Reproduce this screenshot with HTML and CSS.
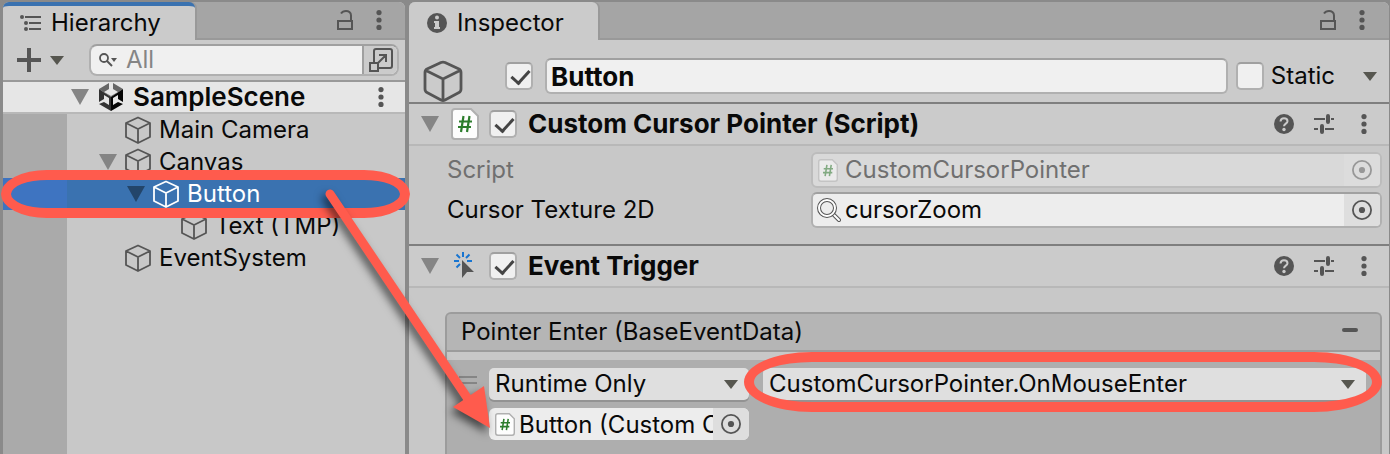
FILE: index.html
```
<!DOCTYPE html>
<html lang="en">
<head>
<meta charset="utf-8">
<title>Editor</title>
<link rel="stylesheet" href="styles.css">
</head>
<body>
<svg class="defs" aria-hidden="true">
  <symbol id="cube" viewBox="0 0 28 28"><path d="M14 1.500 26 7v14l-12 6L2 21V7zM2 7l12 6 12-6M14 13v14" fill="none" stroke="currentColor" stroke-width="1.800" stroke-linejoin="round"/></symbol>
  <symbol id="cube-large" viewBox="0 0 40 42"><path d="M18 2.500 C19.500 1.800 20.500 1.800 22 2.500L36 9Q38 10 38 12.500V29Q38 31.500 36 32.500L22 40Q20 41 18 40L4 32.500Q2 31.500 2 29V12.500Q2 10 4 9zM3 10.500 20 19 37 10.500M20 19v21" fill="none" stroke="currentColor" stroke-width="2.800"/></symbol>
  <symbol id="fold" viewBox="0 0 18 16"><path d="M0 0h18L9 16z" fill="currentColor"/></symbol>
  <symbol id="caret" viewBox="0 0 14 9"><path d="M0 0h14L7 9z" fill="currentColor"/></symbol>
  <symbol id="dots" viewBox="0 0 6 20"><g fill="currentColor"><circle cx="3" cy="2.600" r="2.600"/><circle cx="3" cy="10" r="2.600"/><circle cx="3" cy="17.400" r="2.600"/></g></symbol>
  <symbol id="lock" viewBox="0 0 16 20"><path d="M1 11h14v8H1zM14 11V5.500C14 2.500 11.500 1 9 1S5 2 4 3.500" fill="none" stroke="currentColor" stroke-width="2"/></symbol>
  <symbol id="help" viewBox="0 0 20 20"><circle cx="10" cy="10" r="10" fill="currentColor"/><path d="M6.500 7.500C6.700 5.300 8 4.200 10 4.200s3.500 1.200 3.500 3c0 2.300-3.500 2.600-3.500 5" fill="none" stroke="#cbcbcb" stroke-width="2"/><circle cx="10" cy="15.500" r="1.700" fill="#cbcbcb"/></symbol>
  <symbol id="sliders" viewBox="0 0 20 20"><path d="M0 5h11M17 5h3M0 15h4M11 15h9" stroke="currentColor" stroke-width="2"/><path d="M14 2v6M8 12v6" stroke="currentColor" stroke-width="4" stroke-linecap="round"/></symbol>
  <symbol id="target" viewBox="0 0 20 20"><circle cx="10" cy="10" r="9.100" fill="none" stroke="currentColor" stroke-width="1.800"/><circle cx="10" cy="10" r="3.100" fill="currentColor"/></symbol>
  <symbol id="script" viewBox="0 0 28 32"><path d="M4 1h16l7 7v20q0 3-3 3H4q-3 0-3-3V4q0-3 3-3z" fill="#fdfdfd" stroke="#b0b0b0" stroke-width="2"/><path d="M12.500 8 10 24M18.500 8 16 24M8 13.500h13M7 19h13" fill="none" stroke="#2c7d2c" stroke-width="2.200"/></symbol>
</svg>

<main class="app">
  <section class="panel hierarchy">
    <header class="tabs">
      <h2 class="tab tab-active">
        <svg class="tab-icon" viewBox="0 0 22 18"><g fill="#555"><circle cx="2" cy="3" r="2"/><circle cx="6" cy="9" r="2"/><circle cx="6" cy="15" r="2"/></g><path d="M5 3h16M9 9h12M9 15h12" stroke="#555" stroke-width="2"/></svg>
        Hierarchy
      </h2>
      <div class="tab-tools">
        <button class="icon-btn" aria-label="Lock"><svg width="16" height="20"><use href="#lock"/></svg></button>
        <button class="icon-btn" aria-label="Menu"><svg width="6" height="20"><use href="#dots"/></svg></button>
      </div>
    </header>
    <div class="toolbar">
      <button class="icon-btn add" aria-label="Create">
        <svg width="24" height="24" viewBox="0 0 24 24"><path d="M12 0v24M0 12h24" stroke="#555" stroke-width="4"/></svg>
        <svg class="caret" width="14" height="9"><use href="#caret"/></svg>
      </button>
      <div class="search">
        <svg width="18" height="14" viewBox="0 0 18 14"><circle cx="5" cy="5" r="4" fill="none" stroke="#555" stroke-width="1.800"/><path d="m8 8 5 5" stroke="#555" stroke-width="2"/><path d="M12 5h6l-3 4z" fill="#555"/></svg>
        <input class="search-input" type="text" placeholder="All" aria-label="Search">
        <button class="search-expand" aria-label="Open search window">
          <svg width="24" height="24" viewBox="0 0 24 24"><path d="M5 14V3q0-2 2-2h14q2 0 2 2v15q0 2-2 2H10M1 15h8v8H1zM9 15l8-8M10 7h7v7" fill="none" stroke="#555" stroke-width="2"/></svg>
        </button>
      </div>
    </div>
    <div class="row scene">
      <svg class="fold" width="18" height="16"><use href="#fold"/></svg>
      <svg width="24" height="28" viewBox="0 0 24 28"><path d="M10 0v6L5 9l7 4 7-4-5-3V0l10 6-12 8L0 6z" fill="#666"/><path d="M0 6v13l5-3v-4l5 3v7l-5-3-5 2 12 7V14z" fill="#333"/><path d="M24 6v13l-5-3v-4l-5 3v7l5-3 5 2-12 7V14z" fill="#050505"/></svg>
      <strong class="scene-name">SampleScene</strong>
      <button class="icon-btn" aria-label="Scene menu"><svg width="6" height="20"><use href="#dots"/></svg></button>
    </div>
    <ul class="tree">
      <li class="row depth-1"><svg class="cube" width="28" height="28"><use href="#cube"/></svg>Main Camera</li>
      <li class="row depth-1 open"><svg class="fold" width="18" height="16"><use href="#fold"/></svg><svg class="cube" width="28" height="28"><use href="#cube"/></svg>Canvas</li>
      <li class="row depth-2 open selected"><svg class="fold" width="18" height="16"><use href="#fold"/></svg><svg class="cube" width="28" height="28"><use href="#cube"/></svg>Button</li>
      <li class="row depth-3"><svg class="cube" width="28" height="28"><use href="#cube"/></svg>Text (TMP)</li>
      <li class="row depth-1"><svg class="cube" width="28" height="28"><use href="#cube"/></svg>EventSystem</li>
    </ul>
  </section>

  <section class="panel inspector">
    <header class="tabs">
      <h2 class="tab">
        <svg class="tab-icon info" viewBox="0 0 20 20"><circle cx="10" cy="10" r="10" fill="#555"/><circle cx="10" cy="4.500" r="2" fill="#cbcbcb"/><path d="M7 8h5v6h1v2H7v-2h1v-4H7z" fill="#cbcbcb"/></svg>
        Inspector
      </h2>
      <div class="tab-tools">
        <button class="icon-btn" aria-label="Lock"><svg width="16" height="20"><use href="#lock"/></svg></button>
        <button class="icon-btn" aria-label="Menu"><svg width="6" height="20"><use href="#dots"/></svg></button>
      </div>
    </header>
    <div class="object">
      <svg class="object-icon" width="40" height="42"><use href="#cube-large"/></svg>
      <input class="check" type="checkbox" checked aria-label="Active">
      <input class="object-name" type="text" value="Button" aria-label="Name">
      <label class="static"><input class="check" type="checkbox">Static</label>
      <button class="icon-btn caret" aria-label="Static options"><svg width="14" height="9"><use href="#caret"/></svg></button>
    </div>

    <header class="component">
      <svg class="fold" width="18" height="16"><use href="#fold"/></svg>
      <svg class="component-icon" width="28" height="32"><use href="#script"/></svg>
      <label class="component-title"><input class="check" type="checkbox" checked>Custom Cursor Pointer (Script)</label>
      <div class="component-tools">
        <button class="icon-btn" aria-label="Help"><svg width="20" height="20"><use href="#help"/></svg></button>
        <button class="icon-btn" aria-label="Presets"><svg width="20" height="20"><use href="#sliders"/></svg></button>
        <button class="icon-btn menu" aria-label="Menu"><svg width="6" height="20"><use href="#dots"/></svg></button>
      </div>
    </header>
    <div class="fields">
      <div class="field disabled">
        <span>Script</span>
        <div class="slot">
          <svg class="slot-icon" width="20" height="23"><use href="#script"/></svg>
          <span class="slot-value">CustomCursorPointer</span>
          <button class="pick" disabled aria-label="Pick script"><svg width="20" height="20"><use href="#target"/></svg></button>
        </div>
      </div>
      <div class="field">
        <span>Cursor Texture 2D</span>
        <div class="slot">
          <svg class="slot-icon" width="24" height="24" viewBox="0 0 24 24"><path d="m16 16 6 6" stroke="#555" stroke-width="4" stroke-linecap="round"/><path d="m16 16 6 6" stroke="#fff" stroke-width="2" stroke-linecap="round"/><circle cx="10" cy="10" r="8" fill="none" stroke="#555" stroke-width="4"/><circle cx="10" cy="10" r="8" fill="none" stroke="#fff" stroke-width="2"/></svg>
          <span class="slot-value">cursorZoom</span>
          <button class="pick" aria-label="Pick texture"><svg width="20" height="20"><use href="#target"/></svg></button>
        </div>
      </div>
    </div>

    <header class="component">
      <svg class="fold" width="18" height="16"><use href="#fold"/></svg>
      <svg class="component-icon" width="28" height="32" viewBox="0 0 28 32"><path d="M12 2v5M3 11h5M16 11h5M5.500 4.500 9 8M18.500 4.500 15 8M5.500 17.500 9 14" stroke="#1875d1" stroke-width="2"/><path d="m11 10 12 12h-7l-5 6z" fill="#555"/></svg>
      <label class="component-title"><input class="check" type="checkbox" checked>Event Trigger</label>
      <div class="component-tools">
        <button class="icon-btn" aria-label="Help"><svg width="20" height="20"><use href="#help"/></svg></button>
        <button class="icon-btn" aria-label="Presets"><svg width="20" height="20"><use href="#sliders"/></svg></button>
        <button class="icon-btn menu" aria-label="Menu"><svg width="6" height="20"><use href="#dots"/></svg></button>
      </div>
    </header>
    <div class="event">
      <div class="event-head">
        <span>Pointer Enter (BaseEventData)</span>
        <button class="icon-btn" aria-label="Remove event"><svg width="16" height="4"><rect width="16" height="4" rx="2" fill="#555"/></svg></button>
      </div>
      <div class="event-body">
        <svg class="grip" width="18" height="8" viewBox="0 0 18 8"><path d="M0 1h18M0 7h18" stroke="#858585" stroke-width="2"/></svg>
        <div class="listener">
          <div class="dropdown">
            <select class="select" aria-label="Call state"><option>Runtime Only</option></select>
            <svg class="select-caret" width="14" height="9"><use href="#caret"/></svg>
          </div>
          <div class="dropdown ringed">
            <select class="select" aria-label="Function"><option>CustomCursorPointer.OnMouseEnter</option></select>
            <svg class="select-caret" width="14" height="9"><use href="#caret"/></svg>
          </div>
          <div class="slot target">
            <svg class="slot-icon" width="20" height="23"><use href="#script"/></svg>
            <span class="slot-value">Button (Custom C</span>
            <button class="pick" aria-label="Pick target"><svg width="20" height="20"><use href="#target"/></svg></button>
          </div>
        </div>
      </div>
    </div>
  </section>
</main>
<svg class="arrow" width="500" height="454" aria-hidden="true"><path d="M330 194 470 402" stroke="#ff5b4d" stroke-width="9" stroke-linecap="round"/><path d="M490 428 453 407 484 386z" fill="#ff5b4d"/></svg>
</body>
</html>
```
FILE: styles.css
```
* { box-sizing: border-box; }
body {
  margin: 0;
  overflow: hidden;
  background: #8a8a8a;
  color: #090909;
  font: 24px/32px Inter, "Liberation Sans", sans-serif;
}
svg { display: block; flex: none; }
button, input, select { margin: 0; font: inherit; color: inherit; }
.defs { position: absolute; width: 0; height: 0; }
.app {
  display: grid;
  grid-template-columns: 402px 1fr;
  gap: 4px;
  min-height: 100vh;
  padding: 2px 1px 0 3px;
}
.panel { display: flex; flex-direction: column; min-width: 0; background: #c8c8c8; border-radius: 6px 6px 0 0; }
.icon-btn { display: flex; align-items: center; padding: 0; border: 0; background: none; color: #555; }

.tabs {
  display: flex;
  justify-content: space-between;
  height: 38px;
  background: #a5a5a5;
  border-radius: 6px 6px 0 0;
  box-shadow: inset 0 -2px #999;
}
.tab {
  display: flex;
  align-items: center;
  gap: 10px;
  margin: 0;
  padding: 4px 34px 0 18px;
  font-size: 24px;
  font-weight: 400;
  background: #cbcbcb;
  border-radius: 6px 6px 0 0;
  box-shadow: 2px 0 #999;
}
.tab-active { gap: 9px; padding: 0 34px 0 17px; border-top: 4px solid #3a72b0; }
.tab-icon { width: 22px; height: 18px; }
.info { width: 20px; height: 20px; }
.tab-tools { display: flex; gap: 23px; padding: 0 24px 2px 0; }
.hierarchy .tab-tools { padding-right: 23px; }

.toolbar { display: flex; align-items: center; gap: 25px; height: 42px; padding: 0 6px 0 14px; background: #cbcbcb; border-bottom: 2px solid #999; }
.add { gap: 9px; }
.caret { color: #56564f; }
.search { display: flex; flex: 1; align-items: center; min-width: 0; height: 32px; padding-left: 8px; background: #f0f0f0; border: 2px solid #b0b0b0; border-top-color: #a0a0a0; border-radius: 8px; }
.search-input { flex: 1; min-width: 0; height: 28px; padding: 0 0 0 9px; border: 0; background: none; }
.search-input::placeholder { color: #858585; opacity: 1; }
.search-expand { display: flex; align-items: center; justify-content: center; width: 35px; height: 28px; padding: 0; background: #cbcbcb; border: 0; border-left: 2px solid #a0a0a0; border-radius: 0 6px 6px 0; }

.row { display: flex; align-items: center; gap: 7px; height: 32px; }
.fold { color: #858585; }
.scene { gap: 10px; padding: 0 21px 0 68px; background: #e6e6e6; border-bottom: 2px solid #b8b8b8; }
.scene-name { flex: 1; font-size: 26px; font-weight: 600; }
.tree { flex: 1; margin: 0; padding: 0; list-style: none; background: linear-gradient(90deg, #aaa 64px, #c8c8c8 64px); }
.tree .row { position: relative; padding-bottom: 1px; }
.tree .cube { color: #555; }
.depth-1 { padding-left: 121px; }
.depth-2 { padding-left: 149px; }
.depth-3 { padding-left: 177px; }
.depth-1.open { padding-left: 96px; }
.depth-2.open { padding-left: 124px; }
.tree .selected { z-index: 1; color: #fff; background: linear-gradient(90deg, #3e74c1 64px, #3a72b0 64px); }
.selected .fold { color: #23456a; }
.tree .selected .cube { color: #fff; }
.selected::after { content: ""; position: absolute; inset: -8px -5px -8px -2px; border: 10px solid #ff5b4d; border-radius: 46px / 24px; }

.object { display: flex; align-items: center; height: 64px; padding: 10px 12px 0 14px; background: #cbcbcb; border-bottom: 2px solid #7f7f7f; }
.object-icon { align-self: flex-end; margin-right: 42px; color: #555; }
.object-name { flex: 1; min-width: 0; height: 36px; margin: 0 8px 0 12px; padding: 0 4px; font-size: 26px; font-weight: 700; background: #f0f0f0; border: 2px solid #b0b0b0; border-top-color: #a0a0a0; border-radius: 6px; }
.static { display: flex; align-items: center; gap: 7px; margin-right: 28px; }
.check {
  flex: none;
  appearance: none;
  width: 28px;
  height: 28px;
  border: 2px solid #b0b0b0;
  border-top-color: #a0a0a0;
  border-radius: 5px;
  background: #f0f0f0;
}
.check:checked::after { content: ""; display: block; width: 8px; height: 15px; margin: 2px 0 0 8px; border: solid #444; border-width: 0 3px 3px 0; transform: rotate(42deg); }

.component { display: flex; align-items: center; height: 42px; padding: 0 22px 0 12px; background: #cbcbcb; border-bottom: 2px solid #b8b8b8; }
.component-icon { margin: 0 10px 0 12px; }
.component-title { display: flex; flex: 1; align-items: center; gap: 11px; font-size: 26px; font-weight: 700; }
.component-tools { display: flex; gap: 20px; }
.menu { padding-left: 7px; }
.fields { display: grid; gap: 4px; padding: 6px 7px 16px 38px; border-bottom: 2px solid #7f7f7f; }
.field { display: grid; grid-template-columns: 364fr 571fr; align-items: center; }
.slot { display: flex; align-items: center; min-width: 0; height: 36px; overflow: hidden; background: #ededed; border: 2px solid #b0b0b0; border-top-color: #a0a0a0; border-radius: 6px; }
.slot-icon { margin: 0 7px 0 5px; }
.slot-value { flex: 1; min-width: 0; overflow: hidden; white-space: nowrap; }
.pick { display: flex; flex: none; align-items: center; justify-content: center; align-self: stretch; width: 36px; padding: 0; border: 0; background: #dedede; color: #555; }
.disabled { color: #707070; }
.disabled .slot { background: #d9d9d9; border-color: #bcbcbc; }
.disabled .slot-icon, .disabled .pick svg { opacity: 0.5; }
.field:last-child .slot-icon { margin: 0 4px; }
.disabled .pick { background: #dcdcdc; }

.event { display: flex; flex: 1; flex-direction: column; margin: 24px 7px 0 36px; background: #aeaeae; border: 2px solid #9c9c9c; border-bottom: 0; border-radius: 6px 6px 0 0; }
.event-head { display: flex; justify-content: space-between; height: 38px; padding: 2px 22px 0 14px; background: #b5b5b5; border-bottom: 2px solid #9c9c9c; border-radius: 4px 4px 0 0; }
.event-head .icon-btn { align-self: center; margin-bottom: 6px; }
.event-body { display: flex; gap: 12px; padding: 8px 14px 14px 12px; border-top: 8px solid #c8c8c8; }
.grip { margin-top: 8px; }
.listener { display: grid; flex: 1; grid-template-columns: 260fr 603fr; gap: 8px 14px; min-width: 0; }
.dropdown { position: relative; min-width: 0; height: 32px; }
.select { display: block; width: 100%; height: 32px; padding: 0 30px 0 6px; appearance: none; background: #dfdfdf; border: 0; border-radius: 5px; box-shadow: 0 2px #939393; }
.select-caret { position: absolute; top: 12px; right: 11px; color: #56564f; pointer-events: none; }
.ringed::after { content: ""; position: absolute; inset: -16px -16px -12px -19px; border: 10px solid #ff5b4d; border-radius: 68px / 30px; pointer-events: none; }
.target { height: 32px; border: 0; }
.target .slot-icon { margin: 0 4px 0 6px; }
.target .slot-value { padding-top: 2px; }
.arrow { position: absolute; top: 0; left: 0; z-index: 2; pointer-events: none; filter: drop-shadow(-3px 5px 4px rgba(0, 0, 0, 0.6)); }
```
